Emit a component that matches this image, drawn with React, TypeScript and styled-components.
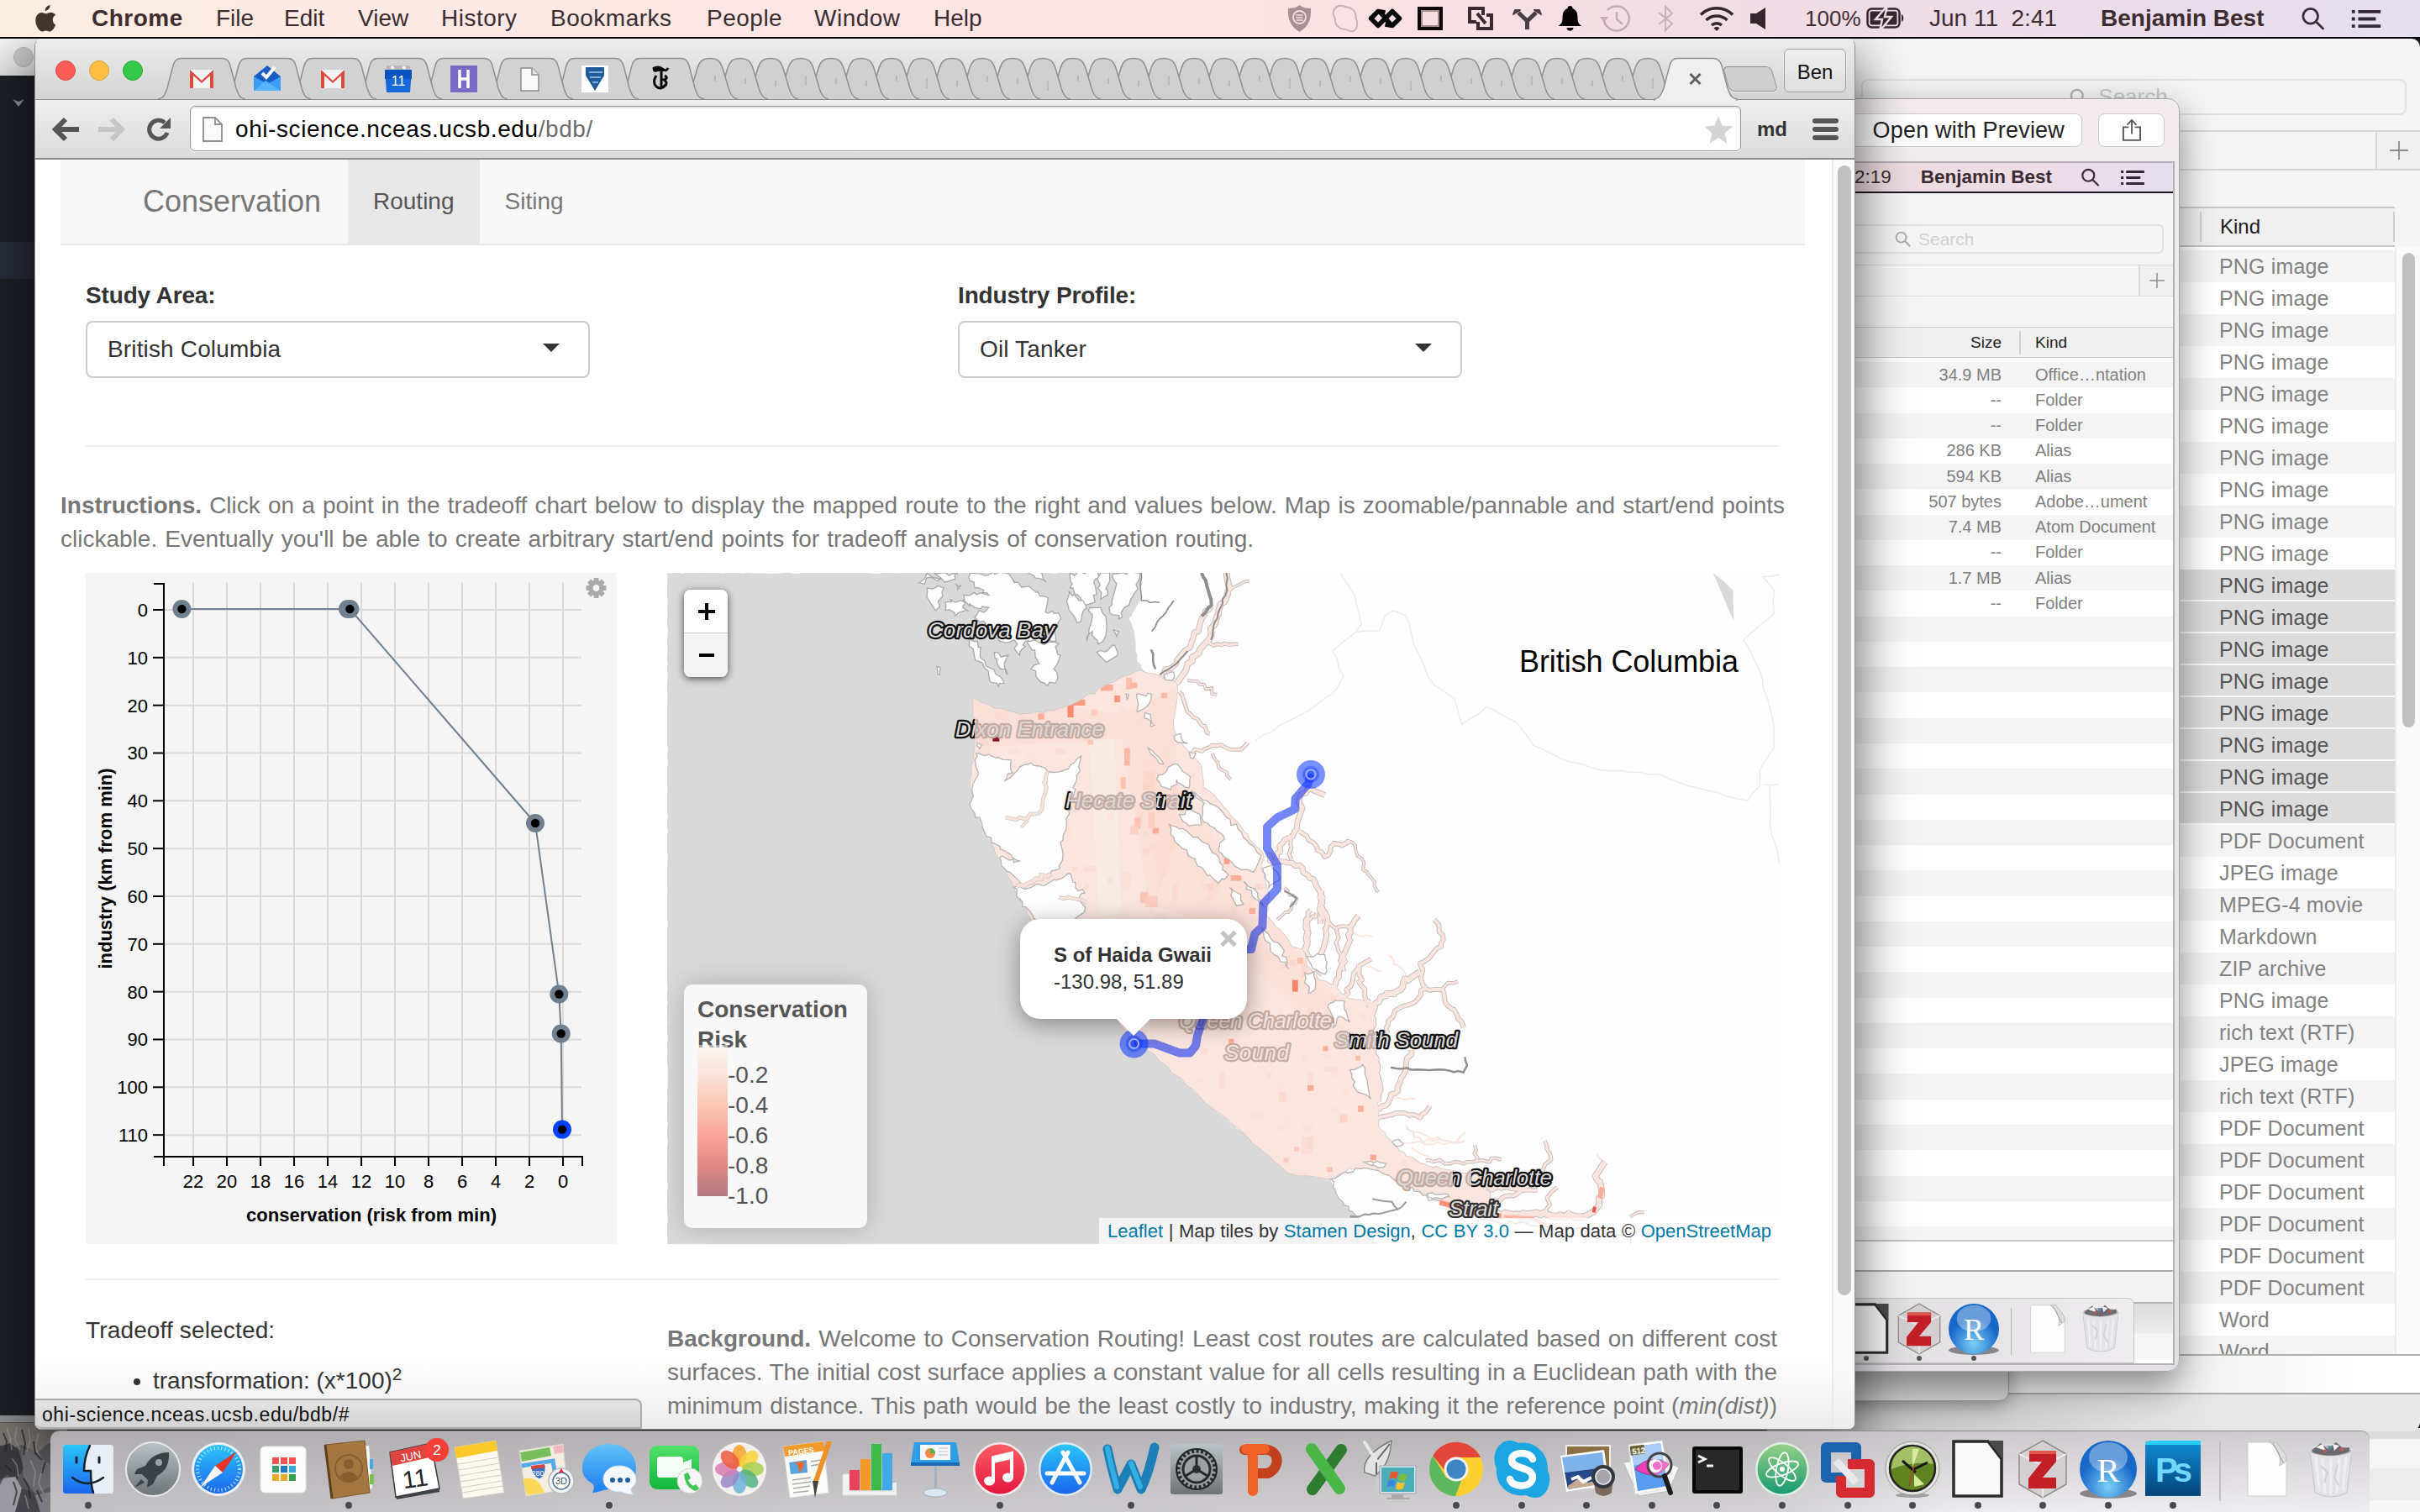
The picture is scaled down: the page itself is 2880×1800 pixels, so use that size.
import React from 'react';
import styled, { createGlobalStyle, css } from 'styled-components';

const sans = '"Liberation Sans", Arial, Helvetica, sans-serif';

const Global = createGlobalStyle`
  * { box-sizing: border-box; }
  html, body { margin: 0; padding: 0; }
  body { width: 2880px; height: 1800px; overflow: hidden; background: #16181c; font-family: ${sans}; }
  svg { display: block; flex: none; }
  svg text { font-family: ${sans}; }
`;

/* ---------- geometry helpers ---------- */

type Pt = [number, number];

const parse = (s: string, ox = 0, oy = 0, k = 1, ky = k): Pt[] =>
  s.trim().split(/\s+/).map((p) => {
    const [x, y] = p.split(',').map(Number);
    return [ox + x / k, oy + y / ky] as Pt;
  });
const north = (s: string) => parse(s, 1080, 680, 3);
const south = (s: string) => parse(s, 1440, 1060, 3);
const inland = (s: string) => parse(s, 1440, 660, 2.0632, 1.8667);

const makeRandom = (seed: number) => {
  let s = seed;
  return () => {
    s = (s * 16807) % 2147483647;
    return s / 2147483647;
  };
};

const jag = (pts: Pt[], closed = true, amp = 5, step = 6) => {
  const rand = makeRandom(Math.round(pts[0][0] * 31 + pts[0][1] * 7) + 11);
  const out: string[] = [];
  const count = closed ? pts.length : pts.length - 1;
  for (let i = 0; i < count; i++) {
    const [x1, y1] = pts[i];
    const [x2, y2] = pts[(i + 1) % pts.length];
    const n = Math.max(1, Math.round(Math.hypot(x2 - x1, y2 - y1) / step));
    for (let j = 0; j < n; j++) {
      const d = j === 0 ? 0 : amp;
      out.push(`${(x1 + ((x2 - x1) * j) / n + (rand() - 0.5) * d).toFixed(1)} ${(y1 + ((y2 - y1) * j) / n + (rand() - 0.5) * d).toFixed(1)}`);
    }
  }
  if (!closed) out.push(pts[pts.length - 1].join(' '));
  return 'M' + out.join('L') + (closed ? 'Z' : '');
};
const line = (pts: Pt[]) => 'M' + pts.map((p) => p.join(' ')).join('L');

/* ---------- desktop ---------- */

const Desktop = styled.div`
  position: relative;
  width: 2880px;
  height: 1800px;
  overflow: hidden;
  background: #16181c;
`;

const Glyph = styled.svg<{ $w: number; $h: number; $ml?: number }>`
  width: ${(p) => p.$w}px;
  height: ${(p) => p.$h}px;
  margin-left: ${(p) => p.$ml || 0}px;
  overflow: visible;
`;

/* ---------- menu bar ---------- */

const MenuBar = styled.header`
  position: absolute;
  inset: 0 0 auto 0;
  height: 46px;
  z-index: 9;
  display: flex;
  align-items: center;
  padding: 0 46px 0 42px;
  border-bottom: 2px solid #06060c;
  background: linear-gradient(90deg, #fbeee0 0%, #fde9e6 20%, #fce2e3 52%, #eedce6 78%, #e5dfef 100%);
  color: #3e2c31;
  font-size: 28px;
  line-height: 44px;
  white-space: nowrap;
`;
const Menus = styled.nav`
  display: flex;
  gap: 39px;
  margin-left: 42px;
  flex: 1;
`;
const Menu = styled.span<{ $w: number; $bold?: boolean }>`
  width: ${(p) => p.$w}px;
  font-weight: ${(p) => (p.$bold ? 700 : 400)};
  letter-spacing: ${(p) => (p.$w > 80 ? 0.5 : 0)}px;
`;
const StatusText = styled.span<{ $w: number; $ml: number; $bold?: boolean; $size?: number }>`
  width: ${(p) => p.$w}px;
  margin-left: ${(p) => p.$ml}px;
  font-weight: ${(p) => (p.$bold ? 700 : 400)};
  font-size: ${(p) => p.$size || 28}px;
  white-space: pre;
`;

const SearchGlyph = ({ w, h, ml, color = '#3b2b38', sw = 3 }: { w: number; h: number; ml?: number; color?: string; sw?: number }) => (
  <Glyph $w={w} $h={h} $ml={ml} viewBox="0 0 30 30" fill="none" stroke={color} strokeWidth={sw} strokeLinecap="round">
    <circle cx="12" cy="12" r="9.5" />
    <path d="M19 19L28 28" />
  </Glyph>
);
const ListGlyph = ({ w, h, ml }: { w: number; h: number; ml?: number }) => (
  <Glyph $w={w} $h={h} $ml={ml} viewBox="0 0 36 22" fill="#33273a">
    <path d="M0 0h4v4H0zM8 0h28v4H8zM0 9h4v4H0zM8 9h22v4H8zM0 18h4v4H0zM8 18h28v4H8z" />
  </Glyph>
);

const TopBar = () => (
  <MenuBar>
    <Glyph $w={25} $h={32} viewBox="0 0 25 32" fill="#43352c">
      <path d="M17.500 0c.4 3.400-2.600 6.900-5.800 6.900C11.200 3.600 14.300.5 17.500 0z" />
      <path d="M24.200 23.500c-1.600 4.300-4.300 8-6.800 8-1.800 0-2.500-1.100-4.700-1.100s-3 1.100-4.600 1.100C4.600 31.500.3 24.600.3 18.300c0-6 3.700-9.400 7.400-9.400 2.200 0 3.800 1.300 5.100 1.300 1.400 0 3.200-1.400 5.800-1.400 1.700 0 4 .8 5.500 3-4.900 2.900-4 9.600.1 11.700z" />
    </Glyph>
    <Menus>
      <Menu $w={109} $bold>Chrome</Menu>
      <Menu $w={42}>File</Menu>
      <Menu $w={49}>Edit</Menu>
      <Menu $w={60}>View</Menu>
      <Menu $w={91}>History</Menu>
      <Menu $w={147}>Bookmarks</Menu>
      <Menu $w={89}>People</Menu>
      <Menu $w={103}>Window</Menu>
      <Menu $w={60}>Help</Menu>
    </Menus>
    <Glyph $w={29} $h={32} viewBox="0 0 29 32">
      <path d="M14.500 0C18 3 23 4 28 4c1 12-3 22-13.500 28C4 26 0 16 1 4c5 0 10-1 13.500-4z" fill="#a78f93" />
      <circle cx="14.500" cy="14.500" r="7.500" fill="none" stroke="#f6dfe1" strokeWidth="1.800" />
      <path d="M10.500 12h8M10.500 15h8M10.500 18h8" stroke="#f6dfe1" strokeWidth="1.500" />
    </Glyph>
    <Glyph $w={33} $h={32} $ml={23} viewBox="0 0 33 32" fill="none" stroke="#c9b1b5" strokeWidth="2">
      <path d="M9 1c4-1 7 .5 9 1.500 8 0 12 6 11.500 13 3 5 2.500 13-3 15.500-4 1-7-1-8.500-2C9 29 4 23 5 16 1 11 2 4 9 1z" />
    </Glyph>
    <Glyph $w={41} $h={24} $ml={11} viewBox="0 0 41 24" fill="none" stroke="#050505" strokeWidth="5.500" strokeLinejoin="round">
      <path d="M20.500 5L12 3.500L3.500 12L12 20.500L20.500 12L29 3.500L37.500 12L29 20.500L20.500 19M14 4L28 20" />
    </Glyph>
    <Glyph $w={30} $h={28} $ml={18} viewBox="0 0 30 28">
      <rect x="2" y="2" width="26" height="24" fill="#f7dfe1" stroke="#0c0809" strokeWidth="4" />
      <rect x="5" y="5" width="20" height="18" fill="none" stroke="#8a6f73" strokeWidth="1.500" />
    </Glyph>
    <Glyph $w={30} $h={28} $ml={30} viewBox="0 0 30 28" fill="none" stroke="#3b2b30" strokeWidth="4">
      <path d="M10 18H2V2h16v8M12 18v8h16V10h-6M11 8l10 12" />
    </Glyph>
    <Glyph $w={35} $h={25} $ml={23} viewBox="0 0 35 25" fill="none" stroke="#463e40" strokeWidth="5" strokeLinejoin="round">
      <path d="M17.500 25V15L7 5M17.500 15L28 5" />
      <path d="M1 7l2-5 6 0zM34 7l-2-5-6 0z" fill="#463e40" strokeWidth="2" />
    </Glyph>
    <Glyph $w={29} $h={30} $ml={19} viewBox="0 0 29 30" fill="#050303">
      <path d="M14.500 0c2 0 3 1 3 3 5 2 6 6 6 12 0 5 2 7 5 9H.5c3-2 5-4 5-9 0-6 1-10 6-12 0-2 1-3 3-3zM10.500 26h8c-.5 5-7.500 5-8 0z" />
    </Glyph>
    <Glyph $w={37} $h={32} $ml={21} viewBox="0 0 37 32" fill="none" stroke="#c4acb2" strokeWidth="2.500">
      <path d="M5 18A15 14.500 0 1 0 9 6M20 8v9l7 6" />
      <path d="M0 14l5 7 5-7z" fill="#c4acb2" stroke="none" />
    </Glyph>
    <Glyph $w={21} $h={30} $ml={31} viewBox="0 0 21 30" fill="none" stroke="#c9b3ba" strokeWidth="2.200">
      <path d="M2 8l16 13-8 8V1l8 8L2 22" />
    </Glyph>
    <Glyph $w={42} $h={29} $ml={29} viewBox="0 0 42 29" fill="none" stroke="#35252c" strokeWidth="3.500">
      <path d="M2 9.500a27 27 0 0 1 38 0M8.500 16a18 18 0 0 1 25 0M15 22a9 9 0 0 1 12 0" />
      <path d="M17.500 25.500a5 5 0 0 1 7 0L21 29z" fill="#35252c" stroke="none" />
    </Glyph>
    <Glyph $w={18} $h={26} $ml={19} viewBox="0 0 18 26" fill="#35252c">
      <path d="M0 7h7L18 0v26L7 19H0z" />
    </Glyph>
    <StatusText $w={63} $ml={47} $size={26}>100%</StatusText>
    <Glyph $w={46} $h={26} $ml={10} viewBox="0 0 46 26">
      <rect x="1.500" y="1.500" width="38" height="22" rx="5" fill="none" stroke="#35252c" strokeWidth="2.500" />
      <rect x="4.500" y="4.500" width="32" height="16" rx="2" fill="#35252c" />
      <path d="M42 8c3 1 3 8 0 9z" fill="#35252c" />
      <path d="M25-2L11 14h8l-3 14L30 11h-8z" fill="#35252c" stroke="#eddbe3" strokeWidth="2.500" />
    </Glyph>
    <StatusText $w={159} $ml={29}>{'Jun 11  2:41'}</StatusText>
    <StatusText $w={194} $ml={45} $bold>Benjamin Best</StatusText>
    <SearchGlyph w={29} h={28} ml={44} />
    <ListGlyph w={36} h={21} ml={31} />
  </MenuBar>
);

/* ---------- editor window peeking out on the left ---------- */

const EditorWindow = styled.section`
  position: absolute;
  left: -40px;
  top: 46px;
  width: 120px;
  height: 1647px;
  border-radius: 12px 12px 10px 10px;
  overflow: hidden;
  background: #1c2026;
  border-bottom: 8px solid #8d9093;
`;
const EditorTitle = styled.div`
  height: 44px;
  padding: 10px 0 0 56px;
  background: linear-gradient(#f4f4f4, #dedede);
`;
const EditorDot = styled.div`
  width: 24px;
  height: 24px;
  border-radius: 50%;
  background: #c8c8c8;
  border: 1px solid #b5b5b5;
`;
const EditorTree = styled.div`
  padding: 28px 0 0 55px;
  height: 198px;
`;
const EditorSelected = styled.div`
  height: 44px;
  background: #282d39;
`;
const Rocks = styled.svg`
  position: absolute;
  left: 0;
  top: 1680px;
  width: 80px;
  height: 120px;
`;

const Editor = () => (
  <>
    <Rocks viewBox="0 0 80 120">
      <rect width="80" height="120" fill="#5a585c" />
      <path d="M0 14H80V44L58 38 44 50 26 40 12 46 0 40z" fill="#7b7571" />
      <path d="M0 42l12-4 10 8 6 22-8 14-12-6-8 6z" fill="#3b3940" />
      <path d="M26 44l14 4 20 16v26l-18 8-14-20z" fill="#6b6a71" />
      <path d="M4 80l14-2 8 14-6 28H0V88z" fill="#9a9aa2" />
      <path d="M26 92l14 4 8 24H18z" fill="#45434a" />
      <path d="M42 100l18-4v24H48z" fill="#7d7c84" />
      <g stroke="#a8a39f" strokeWidth="1.500" fill="none" opacity=".6">
        <path d="M8 20l4 12 2 14M20 18l-2 16 6 12M34 20l2 14-4 14M46 26l-4 18 8 14M14 56l6 8 2 14M36 58l6 14-2 18M50 70l-4 16 6 12M8 92l6 8-2 14M30 100l4 16" />
      </g>
      <g stroke="#26242a" strokeWidth="2" fill="none" opacity=".7">
        <path d="M4 26l4 10-2 12M26 22l4 16-2 14M40 36l2 14 8 8M6 64l8 8M28 80l6 10 2 14M54 60l-4 14M44 94l6 14M16 84l4 12-4 16" />
      </g>
    </Rocks>
    <EditorWindow>
      <EditorTitle><EditorDot /></EditorTitle>
      <EditorTree>
        <Glyph $w={14} $h={9} viewBox="0 0 14 9" fill="#8b93a0"><path d="M0 0l7 3 7-3-7 9z" /></Glyph>
      </EditorTree>
      <EditorSelected />
    </EditorWindow>
  </>
);

/* ---------- Finder window ---------- */

const FinderWindow = styled.section`
  position: absolute;
  left: 2100px;
  top: 46px;
  width: 780px;
  height: 1658px;
  display: flex;
  flex-direction: column;
  overflow: hidden;
  background: #f5f5f5;
  border-radius: 8px 10px 12px 8px;
`;
const FinderTitle = styled.div`
  height: 109px;
  padding: 48px 16px 0 115px;
`;
const FinderSearch = styled.div`
  height: 43px;
  display: flex;
  justify-content: center;
  align-items: center;
  gap: 12px;
  padding-right: 36px;
  border: 2px solid #e0e0e0;
  border-radius: 8px;
  color: #c6c6c6;
  font-size: 26px;
`;
const FinderTabs = styled.div`
  height: 48px;
  display: flex;
  justify-content: flex-end;
  border: solid #d6d6d6;
  border-width: 2px 0;
`;
const AddCell = styled.div<{ $w: number; $s: number }>`
  width: ${(p) => p.$w}px;
  display: flex;
  align-items: center;
  justify-content: center;
  border-left: 2px solid #d9d9d9;
  background: #f0f0f0;
  svg { width: ${(p) => p.$s}px; height: ${(p) => p.$s}px; }
`;
const FinderGap = styled.div`
  height: 43px;
`;
const FinderHead = styled.div`
  height: 48px;
  width: 750px;
  display: flex;
  align-items: center;
  justify-content: flex-end;
  border: solid #c8c8c8;
  border-width: 2px 0;
  background: #f0f0f0;
  font-size: 24px;
  color: #1d1d1d;
`;
const FinderHeadCell = styled.div`
  width: 232px;
  height: 36px;
  line-height: 36px;
  padding-left: 22px;
  border: solid #d0d0d0;
  border-width: 0 2px;
`;
const FinderBody = styled.div`
  height: 1320px;
  display: flex;
  background: #fff;
  overflow: hidden;
  border-bottom: 2px solid #b0b0b0;
`;
const FinderRows = styled.div`
  width: 750px;
  padding-top: 4px;
`;
const FinderRow = styled.div<{ $odd: boolean; $sel: boolean }>`
  height: 38px;
  padding-left: 541px;
  line-height: 38px;
  font-size: 25px;
  letter-spacing: 0.150px;
  color: ${(p) => (p.$sel ? '#555' : '#828282')};
  background: ${(p) => (p.$sel ? '#dcdcdc' : p.$odd ? '#f4f4f4' : '#fff')};
  ${(p) => p.$sel && css`border-bottom: 2px solid #fbfbfb;`}
`;
const FinderTrack = styled.div`
  width: 30px;
  padding: 7px 7px 0;
  background: #fafafa;
  border-left: 2px solid #ececec;
`;
const FinderThumb = styled.div`
  width: 15px;
  height: 565px;
  border-radius: 8px;
  background: #c1c1c1;
`;
const FinderPath = styled.div`
  height: 46px;
  background: linear-gradient(90deg, #eee 60%, #fff 90%);
  border-bottom: 2px solid #aaa;
`;
const FinderFoot = styled.div`
  flex: 1;
  background: linear-gradient(90deg, #bdbdbd 10%, #e8e8e8 70%);
`;

const kinds = [
  ...Array(18).fill('PNG image'),
  'PDF Document', 'JPEG image', 'MPEG-4 movie', 'Markdown', 'ZIP archive', 'PNG image',
  'rich text (RTF)', 'JPEG image', 'rich text (RTF)',
  ...Array(6).fill('PDF Document'), 'Word', 'Word',
];

const Plus = () => (
  <svg viewBox="0 0 24 24" stroke="#8c8c8c" strokeWidth="2"><path d="M12 0v24M0 12h24" /></svg>
);

const Finder = () => (
  <FinderWindow>
    <FinderTitle>
      <FinderSearch><SearchGlyph w={22} h={22} color="#b0b0b0" />Search</FinderSearch>
    </FinderTitle>
    <FinderTabs><AddCell $w={53} $s={22}><Plus /></AddCell></FinderTabs>
    <FinderGap />
    <FinderHead><FinderHeadCell>Kind</FinderHeadCell></FinderHead>
    <FinderBody>
      <FinderRows>
        {kinds.map((k, i) => (
          <FinderRow key={i} $odd={i % 2 === 0} $sel={i >= 10 && i < 18}>{k}</FinderRow>
        ))}
      </FinderRows>
      <FinderTrack><FinderThumb /></FinderTrack>
    </FinderBody>
    <FinderPath />
    <FinderFoot />
  </FinderWindow>
);

const StubWindow = styled.section`
  position: absolute;
  left: 2100px;
  top: 1500px;
  width: 291px;
  height: 168px;
  background: #d4d4d4;
  border: 1px solid #9c9c9c;
  border-radius: 12px;
  box-shadow: 0 4px 22px rgba(0, 0, 0, 0.35);
`;
const UnderDock = styled.section`
  position: absolute;
  left: 2700px;
  top: 1700px;
  width: 180px;
  height: 100px;
  background: linear-gradient(#dcdcdc 0 12px, #f6f6f6 14px 48px, #ececec 48px 86px, #f8f8f8 86px);
`;

/* ---------- Quick Look window ---------- */

const QuickLook = styled.section`
  position: absolute;
  left: 2100px;
  top: 117px;
  width: 494px;
  height: 1516px;
  padding: 0 5px 7px 0;
  display: flex;
  flex-direction: column;
  background: linear-gradient(#f3ecee, #f0ebf0 8%, #e2e0e4);
  border: 1px solid #aaa6aa;
  border-radius: 14px;
  box-shadow: 0 16px 44px rgba(0, 0, 0, 0.45);
`;
const QuickBar = styled.div`
  height: 74px;
  padding: 0 12px;
  display: flex;
  justify-content: flex-end;
  align-items: center;
  gap: 19px;
`;
const QuickButton = styled.div<{ $w: number }>`
  width: ${(p) => p.$w}px;
  height: 40px;
  display: flex;
  justify-content: flex-end;
  align-items: center;
  padding-right: ${(p) => (p.$w > 100 ? 20 : 27)}px;
  background: #fff;
  border: 1px solid #cdc7ca;
  border-radius: 8px;
  font-size: 27px;
  letter-spacing: 0.200px;
  color: #222;
  white-space: nowrap;
`;
const Shot = styled.div`
  flex: 1;
  position: relative;
  display: flex;
  flex-direction: column;
  overflow: hidden;
  border: solid #b7afb8;
  border-width: 2px 2px 2px 0;
  background: #fff;
`;
const ShotMenu = styled.div`
  height: 36px;
  display: flex;
  align-items: center;
  justify-content: flex-end;
  padding: 0 33px 0 0;
  border-bottom: 2px solid #1d1524;
  background: linear-gradient(90deg, #ecdcdf 20%, #eedde6 60%, #e5deee);
  color: #3b2b33;
  font-size: 22.500px;
  line-height: 32px;
`;
const ShotName = styled.b`
  margin: 0 34px 0 35px;
`;
const ShotTitle = styled.div`
  height: 85px;
  padding: 37px 11px 0;
  background: #f5f5f5;
`;
const ShotSearch = styled.div`
  height: 35px;
  display: flex;
  align-items: center;
  gap: 9px;
  padding-left: 141px;
  border: 2px solid #e0e0e0;
  border-radius: 6px;
  color: #d0d0d0;
  font-size: 21px;
`;
const ShotTabs = styled.div`
  height: 38px;
  display: flex;
  justify-content: flex-end;
  background: #f5f5f5;
  border: solid #d9d9d9;
  border-width: 1px 0;
`;
const ShotRow = styled.div<{ $bg: string }>`
  flex: none;
  height: 30.280px;
  display: flex;
  align-items: center;
  font-size: 20px;
  color: #7f7f7f;
  background: ${(p) => p.$bg};
`;
const ShotHead = styled(ShotRow)`
  margin-top: 36px;
  height: 37px;
  border: solid #c9c9c9;
  border-width: 1px 0;
  font-size: 19px;
  color: #222;
`;
const ShotTop = styled.div`
  background: #f5f5f5;
`;
const ShotRows = styled.div`
  padding-top: 5px;
  height: 1052px;
  overflow: hidden;
  border-bottom: 2px solid #c4c4c4;
`;
const SizeCell = styled.span`
  width: 281px;
  text-align: right;
`;
const KindCell = styled.span<{ $head?: boolean }>`
  margin-left: ${(p) => (p.$head ? 21 : 40)}px;
  white-space: nowrap;
  ${(p) => p.$head && css`padding-left: 17px; border-left: 2px solid #d0d0d0; line-height: 28px;`}
`;
const ShotPath = styled.div`
  height: 36px;
  border-bottom: 2px solid #a9a9a9;
`;
const ShotFoot = styled.div`
  height: 38px;
  background: #f3f3f3;
  border-bottom: 2px solid #b5b5b5;
`;
const ShotTail = styled.div`
  flex: 1;
  background: linear-gradient(#dcdcdc, #ececec 35px, #f6f6f6 36px 66px, #fff 66px);
`;
const ShotDock = styled.div`
  position: absolute;
  left: 0;
  bottom: 0;
  width: 439px;
  height: 78px;
  display: flex;
  align-items: flex-start;
  padding: 6px 0 0 91px;
  border: 1px solid #c6c4c6;
  border-radius: 0 8px 0 0;
  background: linear-gradient(90deg, #dcdadc, #eeecee);
`;
const ShotIcon = styled.div<{ $w: number }>`
  width: ${(p) => p.$w}px;
  display: flex;
  flex-direction: column;
  align-items: center;
  gap: 2px;
`;
const ShotDot = styled.i`
  width: 6px;
  height: 6px;
  border-radius: 50%;
  background: #555;
`;
const ShotRule = styled.div`
  width: 1px;
  height: 56px;
  margin: 5px 9px 0 15px;
  background: #bbb;
`;

const files: [string, string][] = [
  ['34.9 MB', 'Office…ntation'], ['--', 'Folder'], ['--', 'Folder'], ['286 KB', 'Alias'], ['594 KB', 'Alias'],
  ['507 bytes', 'Adobe…ument'], ['7.4 MB', 'Atom Document'], ['--', 'Folder'], ['1.7 MB', 'Alias'], ['--', 'Folder'],
  ...Array(25).fill(['', '']),
];

/* ---------- dock drawings ---------- */

const Libre = () => (
  <g>
    <path d="M5 1H46L62 22V66H5z" fill="#fafafa" stroke="#2c2c2c" strokeWidth="3.500" />
    <path d="M46 0H64V22z" fill="#4a4a4a" />
  </g>
);
const Zotero = () => (
  <g>
    <path d="M34 0L62 16V52L34 68L6 52V16z" fill="#d4d0d2" stroke="#8e8c8e" strokeWidth="1.500" />
    <path d="M6 16L34 30L62 16M34 30V68" stroke="#f2f0f2" strokeWidth="1.500" fill="none" />
    <path d="M18 12H50V25L34 44H50V57H17V45L33 25H18z" fill="#c22026" />
    <path d="M18 12H50V16H18z" fill="#e0574f" />
  </g>
);
const RStudio = () => (
  <g>
    <ellipse cx="34" cy="63" rx="34" ry="6" fill="#6f6d70" opacity=".8" />
    <circle cx="34" cy="34" r="34" fill="url(#rGrad)" />
    <ellipse cx="34" cy="20" rx="23" ry="18" fill="#fff" opacity=".35" />
    <text x="34" y="49" textAnchor="middle" fontSize="41" fill="#fff" style={{ fontFamily: '"Liberation Serif", serif' }}>R</text>
  </g>
);
const PaperDoc = () => (
  <g>
    <path d="M12 2H46L58 18V66H12z" fill="#fdfdfd" stroke="#cfcdcf" />
    <path d="M38 2C46 8 52 14 50 30L58 24V18L46 2z" fill="#dedcde" stroke="#bdbbbd" />
    <path d="M42 3L54 26" stroke="#999" />
  </g>
);
const Trash = () => (
  <g>
    <path d="M9 12H59L53 62Q34 72 15 62z" fill="#e3e2e6" stroke="#c6c4c8" />
    <path d="M16 20L20 60M24 22L27 63M34 22V65M44 22L41 63M52 20L48 60" stroke="#efeff2" strokeWidth="3" fill="none" />
    <path d="M22 30L30 38L26 50M42 28L38 44L44 54" stroke="#d3d2d8" strokeWidth="2" fill="none" />
    <ellipse cx="34" cy="12" rx="25" ry="7" fill="#bab8bc" stroke="#eee" />
    <path d="M12 11L22 3L30 10L40 2L48 9L56 8V13Q34 22 12 14z" fill="#6c6a70" />
    <path d="M16 8L24 4L28 12zM36 4L44 6L38 12z" fill="#f4f4f4" />
    <path d="M44 10l6-2-2 6zM26 10l4 2-5 3z" fill="#c85a4c" />
    <path d="M30 6l5 1-3 5z" fill="#4c8ca8" />
  </g>
);

const icons: { name: string; dot?: boolean; art: React.ReactNode }[] = [
  { name: 'finder', dot: true, art: <g><rect x="4" y="5" width="60" height="58" rx="3" fill="#e7eef6" /><path d="M4 8Q4 5 7 5H36C31 16 29 26 29 36H37C37 46 38 56 40 63H7Q4 63 4 60z" fill="url(#blueGrad)" /><path d="M20 20V26M47 20V26" stroke="#13202e" strokeWidth="3" strokeLinecap="round" /><path d="M15 44Q33 58 52 44M36 6C31 16 29 26 29 36H37C37 46 38 56 40 62" stroke="#13202e" strokeWidth="2.500" fill="none" strokeLinecap="round" /></g> },
  { name: 'launchpad', art: <g><circle cx="34" cy="34" r="32" fill="url(#steel)" stroke="#e6eaec" strokeWidth="2" /><path d="M53 14C40 14 30 20 25 30L15 34L12 40L21 40L28 47L27 56L34 52L39 42C50 36 54 26 53 14z" fill="#3c4146" /><circle cx="41" cy="26" r="4" fill="#9aa3a7" /><path d="M20 46L12 56L24 50z" fill="#3c4146" /></g> },
  { name: 'safari', art: <g><circle cx="34" cy="34" r="32" fill="#eef1f4" /><circle cx="34" cy="34" r="29" fill="url(#blueGrad)" /><circle cx="34" cy="34" r="25" fill="none" stroke="#d5ecff" strokeWidth="4" strokeDasharray="1 3.300" /><path d="M56 13L39 38L30 30z" fill="#e5352b" /><path d="M12 56L30 30L39 38z" fill="#f4f4f4" /></g> },
  { name: 'tiles', art: <g><rect x="7" y="7" width="54" height="55" rx="5" fill="#fbfbfb" stroke="#e4e4e4" />{['#f0524f', '#f0524f', '#f0524f', '#35a168', '#1e78c8', '#35a8d8', '#e6ab2c', '#e6ab2c', '#39a052'].map((c, i) => <rect key={i} x={21 + (i % 3) * 10} y={20 + Math.floor(i / 3) * 10} width="8" height="8" fill={c} />)}</g> },
  { name: 'contacts', dot: true, art: <g><path d="M14 12L58 6L62 56L56 60z" fill="#f6f6f4" /><path d="M59 22h4v12h-4z" fill="#4aa7dd" /><path d="M59 40h5v12h-5z" fill="#7ac153" /><path d="M6 5L53 0L59 62L14 69z" fill="#a57740" stroke="#7f5727" /><path d="M6 5L14 69" stroke="#5f3f18" strokeWidth="3" /><circle cx="34" cy="33" r="16" fill="none" stroke="#865e2f" strokeWidth="2" /><circle cx="34" cy="28" r="6" fill="#865e2f" /><path d="M23 43Q34 31 45 43Q34 53 23 43z" fill="#865e2f" /></g> },
  { name: 'calendar', art: <g><path d="M5 14L54 3L64 57L12 67z" fill="#fff" stroke="#3b3b3b" strokeWidth="1.500" /><path d="M5 14L54 3L57 19L8 30z" fill="#e04440" /><path d="M12 67L64 57V61L13 70z" fill="#3e434a" /><text x="17" y="23" fontSize="13" fill="#fff" transform="rotate(-11 30 18)">JUN</text><text x="35" y="55" fontSize="29" textAnchor="middle" fill="#222" transform="rotate(-8 36 44)">11</text><circle cx="61" cy="11" r="14" fill="#f5403a" /><text x="61" y="17" fontSize="17" textAnchor="middle" fill="#fff">2</text></g> },
  { name: 'notes', art: <g><path d="M5 8L54 0L64 62L15 69z" fill="#fcfaf0" stroke="#d4d0c4" /><path d="M5 8L54 0L56 12L7 21z" fill="#fbc92c" /><path d="M9 28l48-8M10 35l48-8M11 42l48-8M12 49l48-8M13 56l48-8M14 62l48-8" stroke="#cfccc4" strokeWidth="1" /></g> },
  { name: 'maps', art: <g><path d="M4 12L56 4L61 58L12 66z" fill="#f3eee2" stroke="#d9d4c8" /><path d="M5 14L40 8L42 18L7 25z" fill="#79be5c" /><path d="M44 7L56 5L57 14L46 16z" fill="#f1b9c4" /><path d="M7 30L44 24L50 60" stroke="#57a8e8" strokeWidth="5" fill="none" /><path d="M8 46Q26 40 34 62L13 65z" fill="#fcd95b" /><path d="M18 30L34 28Q38 40 28 46Q18 42 18 30z" fill="#3a6fc0" stroke="#fff" /><path d="M18 30L34 28L35 32L18 34z" fill="#d3463e" /><text x="26" y="42" fontSize="9" textAnchor="middle" fill="#fff">280</text><circle cx="54" cy="48" r="15" fill="#f4f4f4" stroke="#bbb" strokeWidth="1.500" /><circle cx="54" cy="48" r="10" fill="#fff" stroke="#4a6e94" strokeWidth="1.500" /><text x="54" y="52" fontSize="11" textAnchor="middle" fill="#456">3D</text><path d="M54 33l-3 5h6z" fill="#e24" /></g> },
  { name: 'messages', dot: true, art: <g><path d="M34 4C52 4 66 16 66 33C66 50 52 58 34 58C28 58 20 62 14 62Q17 56 15 52C7 47 2 42 2 33C2 16 16 4 34 4z" fill="url(#skyGrad)" /><path d="M46 30C57 30 66 37 66 46C66 51 63 55 60 57Q59 61 63 64Q54 64 49 61C36 62 27 55 27 46C27 37 35 30 46 30z" fill="#f5f8fc" stroke="#c9dff2" /><circle cx="38" cy="47" r="3" fill="#1c5fa8" /><circle cx="47" cy="47" r="3" fill="#1c5fa8" /><circle cx="56" cy="47" r="3" fill="#1c5fa8" /></g> },
  { name: 'facetime', art: <g><rect x="4" y="6" width="59" height="52" rx="9" fill="url(#greenGrad)" /><path d="M13 22Q13 19 16 19H40Q44 19 44 23V26L54 22V40L44 38Q44 44 40 44H16Q13 44 13 41z" fill="#f5fff5" /><circle cx="52" cy="48" r="15" fill="#f5f5f5" stroke="#ccc" /><path d="M45 40l5-2 3 7-3 2q2 5 6 7l3-2 4 5q-3 4-7 2Q46 54 45 40z" fill="#3cc754" /></g> },
  { name: 'photos', art: <g><circle cx="34" cy="34" r="32" fill="#f3f1ef" />{['#f7a22d', '#f4d23a', '#a8cf4d', '#55b27c', '#6fb2dc', '#9a86c6', '#d67db0', '#ee5a40'].map((c, i) => <ellipse key={i} cx="34" cy="18" rx="8.500" ry="13" fill={c} opacity=".85" transform={`rotate(${i * 45} 34 34)`} />)}</g> },
  { name: 'pages', art: <g><path d="M8 7L56 1L62 62L16 68z" fill="#fbfbf8" stroke="#ddd" /><path d="M8 7L56 1L58 12L10 19z" fill="#f29a2a" /><text x="14" y="17" fontSize="9" fontWeight="700" fill="#fff" transform="rotate(-7 20 14)">PAGES</text><path d="M15 26L36 23L37 38L17 40z" fill="#58a5e2" /><path d="M21 26q6 2 6 12q6-4 6-13z" fill="#ee6a2c" /><path d="M41 25l12-2M41 30l12-2M19 47l22-3M19 52l22-3M20 57l20-3M20 62l18-2" stroke="#aaa" strokeWidth="1.500" /><path d="M66 1L50 48L46 68L44 48L60 1z" fill="#f08f24" /><path d="M50 48L46 68L43 48z" fill="#444" /></g> },
  { name: 'numbers', art: <g><path d="M2 40H10V60H66V65H2z" fill="#f3f3f3" stroke="#ddd" /><path d="M66 50v10h-6V50z" fill="#eee" /><rect x="10" y="35" width="12" height="24" fill="#e8425a" /><rect x="23" y="22" width="12" height="37" fill="#f49a2c" /><rect x="36" y="4" width="12" height="55" fill="#3cbb48" /><rect x="49" y="15" width="12" height="44" fill="#42a9e8" /></g> },
  { name: 'keynote', art: <g><path d="M9 2H59L63 26H5z" fill="#2f9ce8" /><path d="M5 26H63V30H5z" fill="#1b6cb4" /><rect x="16" y="5" width="36" height="18" fill="#f4f8fc" /><circle cx="28" cy="15" r="6" fill="#e84" /><path d="M28 9a6 6 0 0 1 6 6h-6z" fill="#4b4" /><path d="M38 9h11M38 13h11M38 17h11" stroke="#bbb" /><path d="M33 30h3v30h-3z" fill="#9fb4c2" /><ellipse cx="34" cy="62" rx="14" ry="5" fill="#d9e8f2" stroke="#9bb4c4" /></g> },
  { name: 'itunes', dot: true, art: <g><circle cx="34" cy="34" r="32" fill="#f6e9ec" /><circle cx="34" cy="34" r="29.500" fill="url(#redGrad)" /><path d="M26 48V20L48 15V43" stroke="#fff" strokeWidth="4" fill="none" /><path d="M26 20L48 15V22L26 27z" fill="#fff" /><ellipse cx="21.500" cy="48" rx="6.500" ry="5.500" fill="#fff" /><ellipse cx="43.500" cy="44" rx="6.500" ry="5.500" fill="#fff" /></g> },
  { name: 'appstore', art: <g><circle cx="34" cy="34" r="32" fill="#dfeaf4" /><circle cx="34" cy="34" r="29.500" fill="url(#blueGrad)" /><path d="M37 14L18 50M31 14L51 50M12 39H56" stroke="#fff" strokeWidth="5" strokeLinecap="round" fill="none" /></g> },
  { name: 'word', dot: true, art: <g fill="none" strokeLinecap="round" strokeLinejoin="round"><path d="M6 10C10 30 14 44 18 58L34 28L46 58C54 42 58 26 62 8" stroke="#1c7fb8" strokeWidth="11" /><path d="M6 9C10 29 14 43 17 55M34 27L45 55" stroke="#35aee2" strokeWidth="6" /></g> },
  { name: 'settings', art: <g><rect x="4" y="4" width="62" height="60" rx="3" fill="url(#steel)" /><circle cx="35" cy="34" r="24" fill="#9a9ea1" stroke="#222" strokeWidth="2" /><circle cx="35" cy="34" r="22" fill="none" stroke="#26292c" strokeWidth="5" strokeDasharray="3 2.700" /><circle cx="35" cy="34" r="16" fill="#9da1a4" stroke="#26292c" strokeWidth="3" /><circle cx="35" cy="34" r="5" fill="#303438" /><path d="M35 34V19M35 34L22 42M35 34L48 42" stroke="#26292c" strokeWidth="3" /></g> },
  { name: 'powerpoint', art: <g fill="none" strokeLinecap="round" strokeLinejoin="round" transform="translate(4 0)"><path d="M10 11H32C52 9 54 32 38 39H26" stroke="#c3401c" strokeWidth="12" /><path d="M12 10Q20 10 20 22V60M14 10H34" stroke="#f06228" strokeWidth="12" /></g> },
  { name: 'excel', art: <g strokeLinecap="round"><path d="M52 11L18 58" stroke="#2d7c2f" strokeWidth="14" /><path d="M17 10L50 57" stroke="#4bb648" strokeWidth="14" /></g> },
  { name: 'remote', art: <g><path d="M2 38Q-2 18 34 0Q32 30 14 42z" fill="#e2e2e2" stroke="#7d7d7d" strokeWidth="1.500" /><path d="M2 2L16 24L32 4M16 24V40" stroke="#666" strokeWidth="2" fill="none" /><path d="M2 2L16 24" stroke="#e6e6e6" strokeWidth="4" strokeLinecap="round" /><path d="M18 44Q12 62 24 66" stroke="#ccc" strokeWidth="4" fill="none" /><rect x="20" y="30" width="43" height="33" fill="#dfe6ea" stroke="#9aa4aa" /><rect x="22" y="32" width="39" height="29" fill="#49aeb8" /><path d="M33 38q5-3 9 0l-2 8q-4-3-9 0z" fill="#e8582c" /><path d="M44 39q5 3 9 0l-2 8q-5 3-9 0z" fill="#7cbc3c" /><path d="M30 48q5-3 9 0l-2 8q-4-3-9 0z" fill="#3c86dc" /><path d="M41 49q5 3 9 0l-2 8q-5 3-9 0z" fill="#f6c52c" /><path d="M34 64h14v4h8v2H28v-2h6z" fill="#aaa" /></g> },
  { name: 'chrome', dot: true, art: <g><circle cx="34" cy="34" r="32" fill="#fcd02f" /><path d="M6.300 18A32 32 0 0 1 63 20H34L24 40z" fill="#e2453c" /><path d="M6.300 18L22 44L40 48L33 66A32 32 0 0 1 6.300 18z" fill="#5cb75f" /><circle cx="34" cy="34" r="14.500" fill="#f4f4f4" /><circle cx="34" cy="34" r="11.500" fill="#3d86c2" /></g> },
  { name: 'skype', dot: true, art: <g><path d="M20 0C25 0 28 2 30 3C50 0 66 15 65 36C71 47 65 68 50 68C45 68 42 66 39 65C18 68 2 53 4 33C-3 19 5 0 20 0z" fill="#1ba5e3" /><path d="M47 22C44 13 23 12 22 23C22 35 47 30 47 44C46 57 22 56 20 46" stroke="#fff" strokeWidth="8.500" strokeLinecap="round" fill="none" /></g> },
  { name: 'preview', dot: true, art: <g><rect x="10" y="6" width="52" height="50" fill="#8d6f45" stroke="#eee" strokeWidth="2" /><path d="M3 18L55 11L61 52L10 61z" fill="#fff" /><path d="M5 20L53 14L55 32L8 38z" fill="#7db2ea" /><path d="M8 38L55 32L58 50L12 58z" fill="#23498a" /><path d="M12 54L26 44L36 50L58 44V51L12 58z" fill="#c4a890" /><path d="M16 46l8-3 6 6 10-5" stroke="#fff" strokeWidth="4" fill="none" /><path d="M42 46L66 42L64 62Q54 70 45 62z" fill="#7b6a5c" /><circle cx="54" cy="43" r="12" fill="#b9b2b4" stroke="#33393f" strokeWidth="4" /><circle cx="54" cy="43" r="9" fill="#a9a2a8" stroke="#d5e5f2" strokeWidth="1.500" /></g> },
  { name: 'viewer', dot: true, art: <g><path d="M0 26L40 20L66 32L54 60L18 66z" fill="#f6f6f6" stroke="#bbb" /><path d="M6 5L46 0L57 56L14 64z" fill="#fff" stroke="#ddd" /><path d="M9 8L44 3L53 54L17 60z" fill="#5a9bf2" /><path d="M9 8L44 3L47 22L12 30z" fill="#a9cdf8" /><rect x="8" y="6" width="17" height="11" fill="#6d6332" transform="rotate(-7 14 10)" /><text x="10" y="16" fontSize="9.500" fontWeight="700" fill="#fff" transform="rotate(-7 14 10)">512</text><path d="M14 34Q32 14 54 28Q40 50 14 34z" fill="#ee3fb8" stroke="#b02a88" /><circle cx="38" cy="30" r="8" fill="#fff" /><circle cx="40" cy="30" r="5" fill="#ee3fb8" /><circle cx="43" cy="29" r="14" fill="#fff" opacity=".25" /><circle cx="43" cy="29" r="14" fill="none" stroke="#454545" strokeWidth="3" /><path d="M49 42L56 62" stroke="#1c1c1c" strokeWidth="6" strokeLinecap="round" /></g> },
  { name: 'terminal', dot: true, art: <g><rect x="5" y="7" width="60" height="56" rx="3" fill="#080808" /><rect x="9" y="11" width="52" height="48" fill="#282828" /><path d="M12 18L20 22L12 26M22 30H30" stroke="#f4f4f4" strokeWidth="3" fill="none" /></g> },
  { name: 'atom', dot: true, art: <g><circle cx="34" cy="34" r="32" fill="#dcefe0" /><circle cx="34" cy="34" r="29.500" fill="url(#atomGrad)" /><g fill="none" stroke="#fff" strokeWidth="1.800"><ellipse cx="34" cy="34" rx="7" ry="20" transform="rotate(10 34 34)" /><ellipse cx="34" cy="34" rx="7" ry="20" transform="rotate(70 34 34)" /><ellipse cx="34" cy="34" rx="7" ry="20" transform="rotate(130 34 34)" /></g><circle cx="34" cy="34" r="3" fill="#fff" /></g> },
  { name: 'vmware', dot: true, art: <g fill="none" strokeWidth="12"><path d="M32 44H8V8H44V26" stroke="#1c62ac" strokeLinejoin="round" /><path d="M34 28H60V62H26V42" stroke="#d42a30" strokeLinejoin="round" /><path d="M20 24L44 50" stroke="#e9e9ee" strokeWidth="9" /></g> },
  { name: 'clock', dot: true, art: <g><ellipse cx="34" cy="65" rx="20" ry="3" fill="#777" opacity=".6" /><circle cx="34" cy="33" r="32" fill="#e4e4de" stroke="#999" /><circle cx="34" cy="33" r="27" fill="#5f8420" stroke="#222" strokeWidth="2.500" /><path d="M34 7A26 26 0 0 1 59 28Q34 24 9 34A26 26 0 0 1 34 7z" fill="#a3bf68" /><path d="M34 10h8l-8 22zM36 40l12 12-12 3z" fill="#d9eaa0" /><path d="M22 24L38 38M34 35L52 26" stroke="#181818" strokeWidth="3" /><path d="M36 30L30 54" stroke="#b0442a" strokeWidth="1.500" /></g> },
  { name: 'libre', dot: true, art: <Libre /> },
  { name: 'zotero', dot: true, art: <Zotero /> },
  { name: 'rstudio', dot: true, art: <RStudio /> },
  { name: 'photoshop', dot: true, art: <g><path d="M1 2L8 0H67V66H1z" fill="#0a568f" /><path d="M1 2L8 0H67V5H1z" fill="#2ad0f4" /><rect x="1" y="5" width="66" height="60" fill="url(#psGrad)" /><text x="35" y="49" fontSize="40" fontWeight="700" textAnchor="middle" textLength="44" fill="#6fd8fb">Ps</text></g> },
];

const Defs = () => (
  <defs>
    <linearGradient id="blueGrad" x2="0" y2="1"><stop stopColor="#2ac4fa" /><stop offset="1" stopColor="#1c66ee" /></linearGradient>
    <linearGradient id="skyGrad" x2="0" y2="1"><stop stopColor="#62c2fa" /><stop offset="1" stopColor="#1e7eee" /></linearGradient>
    <linearGradient id="greenGrad" x2="0" y2="1"><stop stopColor="#51e06a" /><stop offset="1" stopColor="#14b53a" /></linearGradient>
    <linearGradient id="redGrad" x2="0" y2="1"><stop stopColor="#fb5c62" /><stop offset="1" stopColor="#e71640" /></linearGradient>
    <linearGradient id="atomGrad" x2="0" y2="1"><stop stopColor="#96cf86" /><stop offset="1" stopColor="#179a72" /></linearGradient>
    <linearGradient id="steel" x2="0" y2="1"><stop stopColor="#b9c2c6" /><stop offset="1" stopColor="#6d7376" /></linearGradient>
    <linearGradient id="psGrad" x2="0" y2="1"><stop stopColor="#1087cf" /><stop offset="1" stopColor="#07447c" /></linearGradient>
    <radialGradient id="rGrad" cy=".8"><stop stopColor="#7cd0f8" /><stop offset="1" stopColor="#1868c8" /></radialGradient>
  </defs>
);

const DockBar = styled.footer`
  position: absolute;
  left: 60px;
  top: 1704px;
  width: 2760px;
  height: 96px;
  z-index: 8;
  display: flex;
  align-items: flex-start;
  padding: 11px 0 0 6px;
  border-radius: 10px 10px 0 0;
  background: linear-gradient(rgba(150, 146, 150, 0.35), rgba(255, 255, 255, 0.1)), linear-gradient(90deg, #bdbbbe 0%, #c9c6c9 50%, #d0cdd0 74%, #eae8eb 82%, #edebee 100%);
  box-shadow: 0 -1px 0 #8b898b;
`;
const DockItem = styled.div<{ $w?: number }>`
  width: ${(p) => p.$w || 77.560}px;
  height: 86px;
  display: flex;
  flex-direction: column;
  align-items: center;
  gap: 5px;
`;
const DockDot = styled.i`
  width: 8px;
  height: 8px;
  border-radius: 50%;
  background: #4b494c;
`;
const DockRule = styled.div`
  width: 2px;
  height: 72px;
  margin: 0 15px 0 16px;
  background: #c2c0c3;
`;
const Art = ({ size = 68, children }: { size?: number; children: React.ReactNode }) => (
  <Glyph $w={size} $h={size} viewBox="0 0 68 68">{children}</Glyph>
);

const DockView = () => (
  <DockBar>
    {icons.map((i) => (
      <DockItem key={i.name}>
        <Art>{i.name === 'finder' && <Defs />}{i.art}</Art>
        {i.dot && <DockDot />}
      </DockItem>
    ))}
    <DockRule />
    <DockItem><Art><PaperDoc /></Art></DockItem>
    <DockItem><Art><Trash /></Art></DockItem>
  </DockBar>
);

const QuickLookView = () => (
  <QuickLook>
    <QuickBar>
      <QuickButton $w={300}>Open with Preview</QuickButton>
      <QuickButton $w={79}>
        <Glyph $w={22} $h={28} viewBox="0 0 24 28" fill="none" stroke="#555" strokeWidth="2"><path d="M8 10H1V27H23V10H16M12 19V1M6 7L12 1L18 7" /></Glyph>
      </QuickButton>
    </QuickBar>
    <Shot>
      <ShotMenu>
        <span>2:19</span>
        <ShotName>Benjamin Best</ShotName>
        <SearchGlyph w={23} h={22} />
        <ListGlyph w={30} h={17} ml={24} />
      </ShotMenu>
      <ShotTop>
        <ShotTitle>
          <ShotSearch><SearchGlyph w={19} h={19} color="#a8a8a8" />Search</ShotSearch>
        </ShotTitle>
        <ShotTabs><AddCell $w={41} $s={18}><Plus /></AddCell></ShotTabs>
        <ShotHead $bg="#f0f0f0"><SizeCell>Size</SizeCell><KindCell $head>Kind</KindCell></ShotHead>
      </ShotTop>
      <ShotRows>
        {files.map(([size, kind], i) => (
          <ShotRow key={i} $bg={i % 2 ? '#fff' : '#f4f4f4'}><SizeCell>{size}</SizeCell><KindCell>{kind}</KindCell></ShotRow>
        ))}
      </ShotRows>
      <ShotPath />
      <ShotFoot />
      <ShotTail />
      <ShotDock>
        <ShotIcon $w={56}><Art size={60}><Libre /></Art><ShotDot /></ShotIcon>
        <ShotIcon $w={70}><Art size={60}><Zotero /></Art><ShotDot /></ShotIcon>
        <ShotIcon $w={59}><Art size={60}><RStudio /></Art><ShotDot /></ShotIcon>
        <ShotRule />
        <ShotIcon $w={66}><Art size={60}><PaperDoc /></Art></ShotIcon>
        <ShotIcon $w={62}><Art size={58}><Trash /></Art></ShotIcon>
      </ShotDock>
    </Shot>
  </QuickLook>
);

/* ---------- browser window ---------- */

const Browser = styled.section`
  position: absolute;
  left: 41px;
  top: 46px;
  width: 2167px;
  height: 1656px;
  display: flex;
  flex-direction: column;
  overflow: hidden;
  border: 1px solid #8f8f8f;
  border-top-color: #f4f4f4;
  border-radius: 9px 9px 8px 8px;
  background: #fff;
`;
const BrowserShadow = styled.div`
  position: absolute;
  left: 41px;
  top: 56px;
  width: 2167px;
  height: 1645px;
  border-radius: 9px;
  box-shadow: 0 16px 60px 6px rgba(0, 0, 0, 0.55);
`;
const TabStrip = styled.div`
  height: 72px;
  flex: none;
  display: flex;
  align-items: flex-end;
  padding-left: 24px;
  background: linear-gradient(#ececec, #d4d4d4);
  border-bottom: 1px solid #8d8d8d;
`;
const Light = styled.i<{ $c: string; $e: string; $last?: boolean }>`
  width: 24px;
  height: 24px;
  margin: 0 ${(p) => (p.$last ? 18 : 16)}px 22px 0;
  border-radius: 50%;
  background: ${(p) => p.$c};
  border: 1px solid ${(p) => p.$e};
`;
const Tab = styled.div<{ $w: number; $pull: number; $z: number; $ml?: number }>`
  position: relative;
  z-index: ${(p) => p.$z};
  flex: none;
  width: ${(p) => p.$w}px;
  height: 49px;
  margin-left: ${(p) => p.$ml || 0}px;
  margin-right: ${(p) => p.$pull}px;
  display: flex;
  align-items: center;
  justify-content: center;
`;
const TabShape = styled.svg`
  position: absolute;
  inset: 0;
  width: 100%;
  height: 51px;
  overflow: visible;
`;
const TabIcon = styled.svg`
  position: relative;
  width: 32px;
  height: 32px;
  overflow: visible;
`;
const NewTab = styled.div`
  width: 58px;
  height: 30px;
  margin: 0 11px 9px -3px;
  transform: skewX(16deg);
  border: 1px solid #8f8f8f;
  border-radius: 6px;
  background: #cfcfcf;
  box-shadow: 0 1px 0 #f6f6f6;
`;
const UserButton = styled.div`
  width: 74px;
  height: 52px;
  margin-bottom: 8px;
  border: 1px solid #a0a0a0;
  border-radius: 6px;
  background: linear-gradient(#efefef, #dedede);
  font-size: 24px;
  line-height: 54px;
  text-align: center;
  color: #111;
`;

const wide = 'M0 49C7 48 8 44 11 36L18 9C20 3 22 0.500 28 0.500H76C82 0.500 84 3 86 9L93 36C96 44 97 48 104 49';
const narrow = 'M0 49C6 48 8 44 11 36L18 12C21 3 25 0.500 33 0.500C41 0.500 45 3 48 12L55 36C58 44 60 48 66 49';
const active = 'M-2 51V49C4 48 6 44 9 36L16 9C18 3 20 0.500 25 0.500H68C73 0.500 76 3 78 9L85 36C88 44 89 48 96 49V51';

const gmail = <g><path d="M2 5H30V27H2z" fill="#f2f2f2" /><path d="M2 27V5L16 18L30 5V27H26V12L16 21L6 12V27z" fill="#dd4b3e" /></g>;
const favicons = [
  gmail,
  <g><path d="M0 13L16 0L32 13V29H0z" fill="#1a5bc4" /><path d="M0 13L16 22L32 13V30H0z" fill="#3a9cf4" /><path d="M0 30L14 18L32 30z" fill="#56b4fb" /><path d="M10 9L15 14L25 2" stroke="#fff" strokeWidth="4" fill="none" /></g>,
  gmail,
  <g><path d="M2 0H30V8H2z" fill="#b8b8b8" /><path d="M0 5H32L30 32H2z" fill="#1668d8" /><path d="M0 5H32V16H0z" fill="#0c53c0" /><circle cx="9" cy="2.500" r="2" fill="#fff" /><circle cx="23" cy="2.500" r="2" fill="#fff" /><text x="16" y="24" fontSize="16" textAnchor="middle" fill="#fff">11</text></g>,
  <g><rect width="32" height="32" fill="#7a6cc6" /><path d="M11 5V27M21 5V27M11 16H21" stroke="#fff" strokeWidth="3.500" /></g>,
  <g><path d="M6 3H19L27 11V30H6z" fill="#fafafa" stroke="#8c8c8c" strokeWidth="1.500" /><path d="M19 3V11H27" fill="#e8e8e8" stroke="#8c8c8c" strokeWidth="1.500" /></g>,
  <g><rect width="32" height="32" fill="#fff" /><path d="M5 2H27V12L16 30L5 12z" fill="#1f5c9c" /><path d="M9 8H25M10 14H23M13 20H20" stroke="#a8c6e2" strokeWidth="1.500" /></g>,
  <g><path d="M7 4Q13 0 18 4T25 3M17 7V27M11 12Q6 20 11 25Q17 30 23 22M21 12Q26 15 20 17Q25 20 22 24" fill="none" stroke="#0a0a0a" strokeWidth="3" /><path d="M7 3Q13 0 18 4T25 2Q25 7 20 7Q14 6 10 8Q6 7 7 3z" /></g>,
];

const Toolbar = styled.div`
  height: 71px;
  flex: none;
  display: flex;
  align-items: center;
  padding: 0 18px 0 20px;
  background: linear-gradient(#efefef, #dadada);
  border-bottom: 2px solid #8a8a8a;
`;
const Omnibox = styled.div`
  width: 1846px;
  height: 54px;
  margin: -1px 19px 0 23px;
  display: flex;
  align-items: center;
  padding: 2px 9px 0 14px;
  border: 1px solid #979797;
  border-radius: 6px;
  background: #fff;
  box-shadow: inset 0 2px 2px #e4e4e4, 0 1px 0 #f6f6f6;
  font-size: 28px;
  color: #000;
`;
const Url = styled.span`
  margin-left: 15px;
  flex: 1;
  letter-spacing: 0.580px;
  i { font-style: normal; color: #6d6d6d; }
`;
const Ext = styled.b`
  width: 34px;
  font-size: 24px;
  color: #333;
`;
const Burger = styled.div`
  margin-left: 32px;
  display: flex;
  flex-direction: column;
  gap: 4px;
  i { width: 31px; height: 6px; border-radius: 3px; background: #555; box-shadow: 0 1px 0 #fafafa; }
`;

const Viewport = styled.div`
  flex: 1;
  display: flex;
  overflow: hidden;
`;
const Page = styled.main`
  width: 2138px;
  padding-left: 30px;
  background: linear-gradient(#fff 0 94.500%, #ececec 100%);
  color: #333;
  font-size: 28px;
  line-height: 40px;
`;
const Track = styled.div`
  width: 27px;
  padding: 7px 5px 0;
  background: linear-gradient(#fafafa 0 95%, #eee);
  border-left: 2px solid #e9e9e9;
`;
const Thumb = styled.div`
  width: 16px;
  height: 1345px;
  border-radius: 8px;
  background: #c1c1c1;
`;

const Navbar = styled.nav`
  width: 2076px;
  height: 102px;
  display: flex;
  background: #f8f8f8;
  border-bottom: 2px solid #e7e7e7;
  line-height: 100px;
  color: #777;
`;
const Brand = styled.span`
  width: 342px;
  padding-left: 98px;
  font-size: 36px;
`;
const NavLink = styled.span<{ $on?: boolean }>`
  padding: 0 30px;
  background: ${(p) => (p.$on ? '#e7e7e7' : 'transparent')};
  color: ${(p) => (p.$on ? '#555' : '#777')};
`;
const Inset = styled.div`
  width: 2016px;
  margin-left: 30px;
`;
const Controls = styled(Inset)`
  padding: 40px 0 80px;
  display: flex;
  border-bottom: 2px solid #eee;
`;
const Field = styled.label<{ $w: number }>`
  flex: none;
  width: ${(p) => p.$w}px;
  display: flex;
  flex-direction: column;
  gap: 10px;
  font-weight: 700;
  letter-spacing: -0.150px;
`;
const Select = styled.div`
  width: 600px;
  height: 68px;
  padding: 0 34px 0 24px;
  display: flex;
  align-items: center;
  justify-content: space-between;
  border: 2px solid #ccc;
  border-radius: 8px;
  font-weight: 400;
  letter-spacing: 0.150px;
  &::after { content: ''; border: solid transparent; border-width: 10px 10px 0; border-top-color: #333; margin-top: -4px; }
`;
const Prose = styled.div`
  color: #777;
`;
const Instructions = styled(Prose)`
  padding: 50px 0 20px;
`;
const Line = styled.div<{ $w: number }>`
  width: ${(p) => p.$w}px;
  white-space: nowrap;
  text-align-last: justify;
`;
const Panels = styled(Inset)`
  height: 799px;
  display: flex;
  gap: 60px;
`;
const ChartPanel = styled.div`
  width: 632px;
  background: #f5f5f5;
`;
const MapPanel = styled.div`
  position: relative;
  width: 1324px;
  overflow: hidden;
  background: #d9d9d9;
`;
const Results = styled(Inset)`
  margin-top: 41px;
  padding-top: 40px;
  border-top: 2px solid #eee;
  display: flex;
`;
const Selected = styled.div`
  width: 692px;
  letter-spacing: 0.150px;
  ul { margin: 20px 0 0; padding-left: 80px; line-height: 40px; letter-spacing: 0; }
  sup { font-size: 21px; line-height: 0; }
`;
const Background = styled(Prose)`
  padding-top: 10px;
`;
const StatusBubble = styled.div`
  position: absolute;
  left: 0;
  bottom: 0;
  width: 722px;
  height: 36px;
  padding-left: 8px;
  border: 2px solid #ababab;
  border-left: 0;
  border-radius: 0 8px 0 8px;
  background: linear-gradient(#e3e3e3, #d4d4d4);
  font-size: 23px;
  line-height: 34px;
  letter-spacing: 0.570px;
  color: #111;
`;

/* ---------- tradeoff chart ---------- */

const xTicks = Array.from({ length: 12 }, (_, i) => ({ v: 22 - i * 2, x: 230 + i * 40 }));
const yTicks = Array.from({ length: 12 }, (_, i) => ({ v: i * 10, y: 726 + i * 56.83 }));
const points: Pt[] = [[216.4, 725], [414, 725], [416.4, 725], [637, 980], [665.3, 1183.5], [667.7, 1230.5], [669, 1344.6]];

const Chart = () => (
  <Glyph $w={632} $h={799} viewBox="102 682 632 799">
    <g stroke="#d9d9d9" strokeWidth="2">
      {xTicks.map((t) => <path key={t.v} d={`M${t.x} 694V1377`} />)}
      {yTicks.map((t) => <path key={t.v} d={`M195 ${t.y}H692`} />)}
    </g>
    <g stroke="#000" strokeWidth="2" fill="none">
      <path d="M183 695H195V1388M183 1377H693V1388" />
      {xTicks.map((t) => <path key={t.v} d={`M${t.x} 1377v11`} />)}
      {yTicks.map((t) => <path key={t.v} d={`M182 ${t.y}h13`} />)}
    </g>
    <g fontSize="22">
      {xTicks.map((t) => <text key={t.v} x={t.x} y="1414" textAnchor="middle">{t.v}</text>)}
      {yTicks.map((t) => <text key={t.v} x="176" y={t.y + 8} textAnchor="end">{t.v}</text>)}
    </g>
    <g fontSize="22" fontWeight="700" textAnchor="middle">
      <text x="442" y="1454" textLength="298">conservation (risk from min)</text>
      <text transform="translate(133 1034) rotate(-90)" textLength="239">industry (km from min)</text>
    </g>
    <path d={line(points)} fill="none" stroke="#708090" strokeWidth="2" />
    {points.map(([x, y], i) => (
      <circle key={i} cx={x} cy={y} r="11" fill={i === 6 ? '#0042ff' : '#708090'} />
    ))}
    {points.map(([x, y], i) => i !== 1 && <circle key={i} cx={x} cy={y} r="5.200" />)}
    <g transform="translate(709.500 700)" fill="#aaa">
      {Array.from({ length: 8 }, (_, i) => <rect key={i} x="-3" y="-12" width="6" height="8" rx="1" transform={`rotate(${i * 45})`} />)}
      <circle r="6.500" fill="none" stroke="#aaa" strokeWidth="5" />
    </g>
  </Glyph>
);

/* ---------- map ---------- */

const ocean: Pt[] = [
  [794, 682],
  ...north('835,6 835,100 790,170 810,215 820,320 850,360 740,400 620,470 520,505 400,520 300,490 235,460 240,640 225,760 240,840 260,900 300,970 350,1040 400,1120 440,1240 500,1400 760,1600'),
  ...south('-270,522 0,770 140,885 280,1010 430,1030 450,1090 530,1170 610,1266'),
  [794, 1482],
];
const risk: Pt[] = [
  ...north('235,455 300,485 400,513 520,500 620,460 740,395 830,355 860,365 900,375 960,400 962,440 948,540 960,600 1005,650 1045,690 1055,770 1120,830 1200,930 1270,1010 1262,1060 1290,1150 1280,1230 1330,1280'),
  ...south('290,200 330,210 345,270 390,320 430,335 490,385 560,400 570,540 585,700 600,790 600,840 640,890 700,950 780,985 860,1000 920,1010 1000,1080 1000,1160 900,1140 780,1090 700,1050 600,1000 500,990 430,1030 280,1010 140,885 0,770 -270,522'),
  ...north('500,1400 440,1240 380,1130 300,970 240,840 225,760 240,640'),
];
const alaska = [
  '225,6 240,60 290,85 200,85 190,110 240,130 290,130 240,165 280,190 300,230 330,250 380,245 400,300 420,250 530,250 535,200 540,150 500,150 490,90 440,60 380,40 350,6',
  '215,240 250,250 275,320 345,400 325,412 290,370 240,310', '430,250 540,260 528,400 490,400 440,350 470,330',
  '310,290 360,300 345,330 358,370 320,330', '70,60 130,60 125,90 100,140 80,110', '135,110 190,105 215,140 170,160 135,140',
  '580,6 680,6 672,60 670,110 640,120 580,60', '575,70 640,130 605,185 575,130', '735,6 828,6 810,80 755,170 720,130 740,70',
  '650,130 690,130 710,180 708,230 680,260 660,215 640,250 650,200', '675,290 740,265 750,300 710,325', '735,210 755,215 745,235',
  '105,340 118,345 116,370 108,368', '70,6 130,30 90,25 40,42', '430,6 480,6 495,40 470,25', '690,6 722,6 715,70 690,100 680,60', '95,6 180,8 170,30 130,36', '170,45 192,50 180,66',
].map(north);
const islands = [
  ...[
    '245,650 300,660 370,675 375,720 345,750 400,700 440,685 480,700 500,715 560,710 620,660 605,740 582,830 568,900 555,960 545,1060 510,1080 430,1110 405,1120 345,1060 330,1022 400,1035 350,1000 300,970 265,900 222,830 245,740',
    '380,1128 440,1130 510,1110 580,1080 600,1130 632,1150 600,1170 635,1200 600,1240 620,1270 450,1240 400,1170',
    '818,440 872,440 862,475 820,503', '858,630 895,662 914,690 870,655', '890,745 930,700 965,690 1010,735 1005,775 960,745 940,780 905,768',
    '970,870 1010,845 1045,870 1050,905 1005,910', '935,905 1000,930 1080,990 1115,1040 1145,1085 1110,1115 1060,1070 980,990 940,940',
    '1012,785 1080,830 1180,920 1262,1015 1235,1075 1165,1050 1110,1000 1130,950 1080,910 1050,880 1060,830', '848,505 868,512 882,550 868,555',
    '1200,1108 1250,1150 1275,1200 1230,1160', '1265,1275 1335,1340 1362,1420 1310,1370', '950,590 975,580 1000,615 965,612', '1005,648 1030,650 1020,670',
    '1150,1130 1190,1155 1200,1190 1175,1195', '1270,1060 1300,1050 1330,1100 1290,1130', '248,612 264,620 258,634', '780,438 790,442 784,458', '915,370 950,360 945,390 920,388',
  ].map(north),
  ...[
    '500,640 545,622 562,680 575,745 520,710', '338,295 372,290 374,355 352,368', '345,235 410,230 412,300 360,262', '425,405 480,395 500,470 460,450 440,490',
    '430,1030 520,992 600,1000 680,1040 760,1090 840,1125 900,1150 1000,1180 1200,1200 1500,1230 1500,1290 610,1290 530,1170 460,1100',
    '775,1082 850,1085 855,1095 780,1096', '550,970 630,975 600,990', '650,900 675,890 690,905 665,915',
  ].map(south),
];
const channels: [Pt[], number][] = [
  [north('1085,125 1050,170 1020,240 960,330 905,375'), 5], [north('1140,6 1152,60 1130,110 1100,180 1080,240 1030,300 960,400'), 6],
  [north('1152,60 1190,45 1220,35'), 2], [north('1060,255 1110,260 1180,260'), 3], [north('1000,390 1060,405 1105,440'), 2],
  [north('970,430 1010,510 1080,580'), 3], [north('1000,650 1060,635 1120,620 1180,637 1215,612'), 3], [north('1090,650 1110,700 1155,745'), 2],
  [north('500,715 490,800 480,850 430,880 350,880'), 3], [north('430,880 405,915'), 2], [north('510,1080 430,1115 390,1125'), 4], [north('540,1165 600,1170 640,1185'), 3],
  [north('1490,800 1430,775 1400,810 1405,860 1390,920 1340,970 1310,1040 1280,1010'), 5], [north('1400,930 1450,970 1490,1020 1510,985 1580,965'), 4],
  [inland('300,640 350,640 362,670 385,705 415,750'), 2], [north('1300,1040 1400,1050 1450,1100 1480,1160 1475,1260'), 5], [north('1360,940 1370,1030'), 3],
  [north('1345,1130 1390,1170 1370,1205 1320,1245'), 2], [north('1460,1220 1430,1250 1425,1350'), 3],
  [south('360,70 340,120 345,220 400,300'), 4], [south('400,0 400,60 420,110 395,230'), 5], [south('530,90 500,130 490,200 460,310 430,350'), 5],
  [south('420,110 450,135 500,130'), 3], [south('450,135 455,200 480,290'), 3], [south('575,245 530,270 510,320 470,390'), 4], [south('530,270 540,340 570,400'), 4],
  [south('800,105 832,160 825,200 750,260 755,300 770,350 830,355 840,400 880,440 905,490'), 4], [south('750,290 690,330 680,355 610,380 575,430'), 6],
  [south('770,350 730,400 660,430 635,480 635,510'), 4], [south('830,350 850,330 885,325'), 2.500], [south('575,400 565,540 590,640 595,760'), 11],
  [south('720,570 700,620 690,660 660,725 600,785'), 5], [south('600,815 680,795 750,812 785,770'), 4], [south('770,965 860,975 960,965 1040,962'), 2.500],
  [south('945,910 950,970'), 2.500], [south('1195,895 1218,960 1150,1020 1000,1050'), 3], [south('920,1010 1000,1060 1130,1060'), 7], [south('1410,970 1375,1020 1398,1070 1380,1135 1340,1165'), 6],
  [south('1240,1060 1210,1090 1205,1160'), 3], [south('850,1120 950,1150 1080,1160 1150,1155 1250,1160 1340,1165'), 7], [south('500,400 500,470 580,460'), 3],
  [south('1500,1166 1550,1150'), 2], [south('960,1130 1040,1100 1130,1070 1170,1070'), 4],
];
const greyWater: [Pt[], number][] = [
  [north('1050,6 1068,50 1085,122 1050,160'), 4], [north('835,6 835,105 900,112'), 1.5], [north('950,105 900,170 872,215'), 1.8], [north('870,280 885,350'), 2.500],
  [north('900,370 960,330 1000,285'), 2], [south('645,632 740,640 820,640 905,650 918,625 910,595'), 2.500], [south('580,1102 650,1112 670,1140 700,1112'), 2], [south('500,1165 600,1155 665,1140'), 2],
  [south('265,2 310,28 285,60'), 2], [inland('40,41 42,80 20,130 2,190'), 2],
];
const faint = [
  '700,850 780,880 900,900', '690,900 800,905 910,895', '720,920 790,960', '660,740 730,745', '880,900 910,860', '640,230 700,300', '510,150 580,165',
  '560,270 610,290', '1100,1180 1200,1210 1300,1195 1400,1240', '700,840 760,900 820,890', '1380,940 1410,970', '1160,1180 1280,1200',
].map(south);
const rivers = [
  '320,41 355,90 372,155 355,175 300,215 328,270 300,310 245,345 170,380 110,415',
  '355,173 415,170 430,135 450,125 480,135 500,200 550,290 600,320 618,378 680,338 750,372 795,425 880,460 960,480 1100,488 1200,520 1320,547 1350,515 1350,480 1385,430 1385,380 1350,260 1310,190 1385,130 1385,80 1357,50 1398,45',
  '1360,512 1398,510', '1375,515 1375,600 1398,690',
].map(inland);

type Cell = [number, number, number, number, string];
const hotN: Cell[] = [
  [304, 586, 24, 22, '#8a1622'], [571, 480, 22, 42, '#fb8b70'], [580, 458, 54, 22, '#fc9b83'], [690, 405, 44, 22, '#fdab96'], [738, 444, 22, 24, '#fc9880'],
  [466, 508, 22, 22, '#fdac97'], [780, 380, 22, 42, '#fdbfae'], [796, 398, 24, 20, '#fcb5a2'], [774, 632, 20, 62, '#fdb7a4'], [761, 735, 18, 42, '#fdbfae'],
  [906, 434, 22, 20, '#fcbba8'], [642, 602, 22, 18, '#fdc6b6'], [657, 494, 20, 20, '#fdcabb'], [810, 880, 22, 40, '#fdc3b3'], [875, 917, 22, 20, '#fca893'],
  [1130, 1026, 20, 20, '#fc9e87'], [1154, 1086, 38, 20, '#fdae99'], [1220, 1204, 22, 20, '#fdb09c'], [830, 1145, 30, 40, '#fdc6b6'], [850, 1160, 44, 40, '#fccdbf'],
  [1374, 1460, 20, 42, '#fc8268'], [860, 860, 24, 60, '#fccfc2'], [795, 910, 30, 30, '#fdd0c4'], [885, 800, 22, 22, '#fca58e'],
];
const hotS: Cell[] = [
  [418, 454, 22, 20, '#e9473a'], [66, 530, 20, 18, '#fdae99'], [402, 556, 20, 18, '#fcb5a2'], [348, 696, 22, 20, '#fdac97'], [528, 769, 20, 22, '#fdac97'],
  [572, 944, 22, 20, '#fca690'], [418, 988, 20, 18, '#fcc0af'], [245, 720, 28, 36, '#fbdacf'], [465, 800, 26, 30, '#fbd3c7'], [130, 590, 24, 16, '#fdb8a6'],
  [312, 240, 20, 22, '#fdbfae'], [142, 64, 20, 20, '#fcb09c'], [300, 915, 18, 18, '#fccabd'], [262, 955, 18, 18, '#fccabd'], [520, 590, 18, 18, '#fcc0af'],
];

const speckles = (() => {
  const rand = makeRandom(4242);
  return Array.from({ length: 420 }, () => ({
    x: 1150 + Math.floor(rand() * 78) * 7,
    y: 800 + Math.floor(rand() * 88) * 7,
    w: rand() > 0.7 ? 14 : 7,
    h: rand() > 0.8 ? 21 : 7,
    o: 0.03 + rand() * 0.16,
  }));
})();

const soft = '#c3aaa3';
const fades: { id: string; x1: number; x2: number; stops: [number, string][] }[] = [
  { id: 'dixon', x1: 1137, x2: 1314, stops: [[0.13, '#111'], [0.13, soft]] },
  { id: 'hecate', x1: 1268, x2: 1420, stops: [[0.04, '#111'], [0.04, soft], [0.71, soft], [0.71, '#111'], [0.79, '#111'], [0.79, soft], [0.88, soft], [0.88, '#111']] },
  { id: 'smith', x1: 1588, x2: 1735, stops: [[0.12, soft], [0.12, '#111'], [0.25, '#111'], [0.25, soft], [0.34, soft], [0.34, '#111']] },
  { id: 'qcs', x1: 1662, x2: 1847, stops: [[0.36, soft], [0.36, '#111'], [0.42, '#111'], [0.42, soft], [0.48, soft], [0.48, '#111']] },
];
const labels: [string, number, number, number, string][] = [
  ['Cordova Bay', 1104, 759, 151, '#111'], ['Dixon Entrance', 1137, 877, 177, 'url(#dixon)'], ['Hecate Strait', 1268, 962, 150, 'url(#hecate)'],
  ['Queen Charlotte', 1403, 1224, 182, soft], ['Sound', 1457, 1262, 77, soft], ['Smith Sound', 1588, 1247, 147, 'url(#smith)'],
  ['Queen Charlotte', 1662, 1411, 185, 'url(#qcs)'], ['Strait', 1724, 1448, 59, '#333'],
];
const route = [
  north('1440,725 1430,760 1385,812 1383,850 1320,880 1284,913 1284,990 1320,1050 1320,1135 1270,1188 1267,1270 1240,1295 1227,1350 1200,1350'),
  [[1433, 1208], [1425, 1233], [1423, 1245], [1416, 1253.5], [1403.7, 1253.5], [1373.8, 1242.5], [1349.600, 1242.5]] as Pt[],
];

const Terrain = () => (
  <Glyph $w={1324} $h={799} viewBox="794 682 1324 799">
    <defs>
      <clipPath id="riskClip"><path d={jag(risk, true, 3)} /></clipPath>
      {fades.map((f) => (
        <linearGradient key={f.id} id={f.id} gradientUnits="userSpaceOnUse" x1={f.x1} x2={f.x2} y1="0" y2="0">
          {f.stops.map(([o, c], i) => <stop key={i} offset={o} stopColor={c} />)}
        </linearGradient>
      ))}
    </defs>
    <rect x="794" y="682" width="1324" height="799" fill="#fefefe" />
    <path d={jag(ocean, true, 2)} fill="#d9d9d9" />
    <path d={line(inland('1235,41 1262,60 1284,80 1286,148 1265,105'))} fill="#d9d9d9" />
    <g fill="none" stroke="#ebebeb" strokeWidth="1.500" strokeLinejoin="round">{rivers.map((r, i) => <path key={i} d={jag(r, false, 3, 12)} />)}</g>
    <g fill="none" stroke="#fbe4dc" strokeWidth="1.800">{faint.map((r, i) => <path key={i} d={jag(r, false, 5)} />)}</g>
    <g fill="#fefefe" stroke="#a9a9a9" strokeWidth="1.300">{alaska.map((a, i) => <path key={i} d={jag(a, true, 7, 5)} />)}</g>
    <g fill="none" stroke="#bdb7b4" strokeLinejoin="round">
      {channels.map(([c, w], i) => <path key={i} d={jag(c, false, 5, 5)} strokeWidth={w + 1.800} />)}
      <path d={jag(risk, true, 3)} strokeWidth="1.600" stroke="#cfc8c5" />
    </g>
    <g fill="none" stroke="#fae5de">
      {channels.map(([c, w], i) => <path key={i} d={jag(c, false, 5, 5)} strokeWidth={w} />)}
    </g>
    <g fill="none" stroke="#8f8f8f" strokeLinejoin="round">{greyWater.map(([c, w], i) => <path key={i} d={jag(c, false, 2.500)} strokeWidth={w} />)}</g>
    <path d={jag(risk, true, 3)} fill="#fae6df" />
    <g clipPath="url(#riskClip)">
      <path d="M1150 820L1330 850 1400 820V1000L1370 1090 1335 880 1150 890z" fill="#fcdacf" opacity=".45" />
      <path d="M1360 900L1420 960 1500 1080 1600 1200 1560 1220 1440 1100 1380 1080z" fill="#fcd9cd" opacity=".4" />
      <path d="M1296 880L1326 880 1335 1090 1308 1090z" fill="#f7efec" opacity=".5" />
      {speckles.map((s, i) => <rect key={i} x={s.x} y={s.y} width={s.w} height={s.h} fill="#fcb9a6" opacity={s.o} />)}
      {hotN.map(([x, y, w, h, c], i) => <rect key={i} x={1080 + x / 3} y={680 + y / 3} width={w / 3} height={h / 3} fill={c} />)}
      {hotS.map(([x, y, w, h, c], i) => <rect key={i} x={1440 + x / 3} y={1060 + y / 3} width={w / 3} height={h / 3} fill={c} />)}
    </g>
    <g fill="#fefefe" stroke="#b9b4b2" strokeWidth="1.300">{islands.map((a, i) => <path key={i} d={jag(a, true, 5, 5)} />)}</g>
    <g fill="none">
      {channels.slice(8, 12).map(([c, w], i) => <path key={i} d={jag(c, false, 5, 5)} strokeWidth={w + 1.600} stroke="#cfc6c2" />)}
      {channels.slice(8, 12).map(([c, w], i) => <path key={i} d={jag(c, false, 5, 5)} strokeWidth={w} stroke="#f9e2da" />)}
      <path d={line(south('820,1115 880,1130 940,1150 1040,1163'))} stroke="#fb9379" strokeWidth="6" />
      <path d={line(south('1050,1165 1150,1170 1200,1195'))} stroke="#fcb9a6" strokeWidth="4" />
      <path d={line(south('1400,1060 1392,1100'))} stroke="#fbb09c" strokeWidth="6" />
      <path d={line(south('1374,1130 1370,1150'))} stroke="#ef5a48" strokeWidth="4" />
    </g>
    <g fill="none" stroke="#9b9b9b">{greyWater.slice(6, 8).map(([c, w], i) => <path key={i} d={jag(c, false, 2.500)} strokeWidth={w} />)}</g>
    <g fontSize="26" fontStyle="italic" paintOrder="stroke" strokeWidth="4.500" strokeLinejoin="round">
      {labels.map(([t, x, y, w, s], i) => <text key={i} x={x} y={y} textLength={w} stroke={s} fill={s === soft ? '#f5e4de' : '#dcd8d7'}>{t}</text>)}
    </g>
    <text x="1808" y="800" fontSize="36" textLength="261">British Columbia</text>
    <g fill="none" stroke="#0a2bee" strokeOpacity=".57" strokeWidth="10" strokeLinejoin="round">{route.map((r, i) => <path key={i} d={line(r)} />)}</g>
    {[[1560, 922], [1349.600, 1242.5]].map(([x, y]) => (
      <g key={x}>
        <circle cx={x} cy={y} r="17" fill="#0a35ff" fillOpacity=".55" />
        <circle cx={x} cy={y} r="10" fill="#0a35ff" fillOpacity=".4" />
        <circle cx={x} cy={y} r="5.500" fill="#0a35ff" fillOpacity=".2" stroke="#a9b4f8" strokeWidth="2" />
      </g>
    ))}
  </Glyph>
);

const ZoomControl = styled.div`
  position: absolute;
  left: 20px;
  top: 20px;
  width: 52px;
  border-radius: 8px;
  overflow: hidden;
  box-shadow: 0 2px 10px rgba(0, 0, 0, 0.65);
`;
const ZoomButton = styled.div<{ $off?: boolean }>`
  height: 52px;
  display: flex;
  align-items: center;
  justify-content: center;
  background: ${(p) => (p.$off ? '#f4f4f4' : '#fff')};
  border-bottom: ${(p) => (p.$off ? '0' : '1px solid #ccc')};
  svg { margin-left: 2px; }
`;
const Legend = styled.div`
  position: absolute;
  left: 20px;
  bottom: 19px;
  width: 218px;
  height: 290px;
  padding: 12px 16px;
  border-radius: 10px;
  background: rgba(255, 255, 255, 0.8);
  box-shadow: 0 0 30px rgba(0, 0, 0, 0.2);
  color: #555;
  line-height: 36px;
`;
const LegendScale = styled.div`
  display: flex;
  margin-top: -12px;
`;
const Ramp = styled.div`
  width: 36px;
  height: 180px;
  background: linear-gradient(rgba(252, 244, 240, 0.5), #fbe2d8 20%, #fac4b1 42%, #f99f94 63%, #dc8685 82%, #b0797e);
`;
const RampLabels = styled.div`
  padding-top: 18px;
`;
const Popup = styled.div`
  position: absolute;
  left: 420px;
  top: 412px;
  width: 270px;
  height: 119px;
  padding: 27px 0 0 40px;
  border-radius: 24px;
  background: #fff;
  box-shadow: 0 6px 28px rgba(0, 0, 0, 0.4);
  font-size: 24px;
  line-height: 32px;
  white-space: nowrap;
  &::after { content: ''; position: absolute; left: 114px; top: 118px; border: solid transparent; border-width: 21px 21px 0; border-top-color: #fff; }
`;
const PopupClose = styled.svg`
  position: absolute;
  right: 12px;
  top: 14px;
  width: 20px;
  height: 19px;
`;
const Attribution = styled.div`
  position: absolute;
  right: 0;
  bottom: 0;
  width: 810px;
  height: 31px;
  padding: 0 10px;
  background: rgba(255, 255, 255, 0.7);
  font-size: 22px;
  line-height: 32px;
  text-align-last: justify;
  white-space: nowrap;
  a { color: #0078a8; }
`;

const MapView = () => (
  <MapPanel>
    <Terrain />
    <ZoomControl>
      <ZoomButton><Glyph $w={20} $h={20} viewBox="0 0 20 20" stroke="#000" strokeWidth="4"><path d="M10 0V20M0 10H20" /></Glyph></ZoomButton>
      <ZoomButton $off><Glyph $w={18} $h={4} viewBox="0 0 18 4"><path d="M0 0H18V4H0z" /></Glyph></ZoomButton>
    </ZoomControl>
    <Legend>
      <b>Conservation<br />Risk</b>
      <LegendScale>
        <Ramp />
        <RampLabels>
          {['-0.2', '-0.4', '-0.6', '-0.8', '-1.0'].map((v) => <div key={v}>{v}</div>)}
        </RampLabels>
      </LegendScale>
    </Legend>
    <Popup>
      <b>S of Haida Gwaii</b><br />-130.98, 51.89
      <PopupClose viewBox="0 0 20 19" stroke="#c3c3c3" strokeWidth="5"><path d="M2 1.500L18 17.500M18 1.500L2 17.500" /></PopupClose>
    </Popup>
    <Attribution>
      <a>Leaflet</a> | Map tiles by <a>Stamen Design</a>, <a>CC BY 3.0</a> — Map data © <a>OpenStreetMap</a>
    </Attribution>
  </MapPanel>
);

const BrowserView = () => (
  <Browser>
    <TabStrip>
      <Light $c="#fc5b57" $e="#e2453f" />
      <Light $c="#fdbe41" $e="#dfa033" />
      <Light $c="#35c84a" $e="#27aa35" $last />
      {favicons.map((f, i) => (
        <Tab key={i} $w={104} $pull={-26} $z={50 - i}>
          <TabShape viewBox="0 0 104 51"><path d={wide} fill="#d2d2d2" stroke="#8f8f8f" strokeWidth="1.500" /></TabShape>
          <TabIcon viewBox="0 0 32 32">{f}</TabIcon>
        </Tab>
      ))}
      {Array.from({ length: 32 }, (_, i) => (
        <Tab key={i} $w={66} $pull={-30} $z={40 - i}>
          <TabShape viewBox="0 0 66 51">
            <path d={narrow} fill="#d0d0d0" stroke="#8f8f8f" strokeWidth="1.500" />
            <path d={`M39 ${21 + (i % 3) * 3}v${i % 4 === 3 ? 12 : 7}`} stroke="#b2b2b2" strokeWidth="1.500" />
          </TabShape>
        </Tab>
      ))}
      <Tab $w={94} $pull={-8} $z={60} $ml={7}>
        <TabShape viewBox="0 0 94 51"><path d={active} fill="#f0f0f0" stroke="#8f8f8f" strokeWidth="1.500" /></TabShape>
        <TabIcon viewBox="0 0 32 32"><path d="M9.500 10L21.500 22M21.500 10L9.500 22" stroke="#5d5d5d" strokeWidth="3" /></TabIcon>
      </Tab>
      <NewTab />
      <UserButton>Ben</UserButton>
    </TabStrip>
    <Toolbar>
      <Glyph $w={32} $h={28} viewBox="0 0 32 28" fill="none" stroke="#555" strokeWidth="6"><path d="M32 14H5M16 2L4 14L16 26" /></Glyph>
      <Glyph $w={32} $h={28} $ml={23} viewBox="0 0 32 28" fill="none" stroke="#c6c6c6" strokeWidth="6"><path d="M0 14H27M16 2L28 14L16 26" /></Glyph>
      <Glyph $w={28} $h={28} $ml={26} viewBox="0 0 28 28" fill="none" stroke="#555" strokeWidth="5"><path d="M24 18A11 11 0 1 1 21 6" /><path d="M28 0V13H15z" fill="#555" stroke="none" /></Glyph>
      <Omnibox>
        <Glyph $w={24} $h={30} viewBox="0 0 24 30" fill="#fbfbfb" stroke="#8f8f8f" strokeWidth="1.800"><path d="M1 1H15L23 9V29H1zM15 1V9H23" /></Glyph>
        <Url>ohi-science.nceas.ucsb.edu<i>/bdb/</i></Url>
        <Glyph $w={34} $h={33} viewBox="0 0 34 33" fill="#d4d4d4"><path d="M17 0L21.500 11.500L34 12.500L24.500 20.500L27.500 33L17 26L6.500 33L9.500 20.500L0 12.500L12.500 11.500z" /></Glyph>
      </Omnibox>
      <Ext>md</Ext>
      <Burger><i /><i /><i /></Burger>
    </Toolbar>
    <Viewport>
      <Page>
        <Navbar>
          <Brand>Conservation</Brand>
          <NavLink $on>Routing</NavLink>
          <NavLink>Siting</NavLink>
        </Navbar>
        <Controls>
          <Field $w={1038}>Study Area:<Select>British Columbia</Select></Field>
          <Field $w={600}>Industry Profile:<Select>Oil Tanker</Select></Field>
        </Controls>
        <Instructions>
          <Line $w={2052}><b>Instructions.</b> Click on a point in the tradeoff chart below to display the mapped route to the right and values below. Map is zoomable/pannable and start/end points</Line>
          <Line $w={1420}>clickable. Eventually you'll be able to create arbitrary start/end points for tradeoff analysis of conservation routing.</Line>
        </Instructions>
        <Panels>
          <ChartPanel><Chart /></ChartPanel>
          <MapView />
        </Panels>
        <Results>
          <Selected>
            Tradeoff selected:
            <ul><li>transformation: (x*100)<sup>2</sup></li></ul>
          </Selected>
          <Background>
            <Line $w={1321}><b>Background.</b> Welcome to Conservation Routing! Least cost routes are calculated based on different cost</Line>
            <Line $w={1321}>surfaces. The initial cost surface applies a constant value for all cells resulting in a Euclidean path with the</Line>
            <Line $w={1321}>minimum distance. This path would be the least costly to industry, making it the reference point (<em>min(dist)</em>)</Line>
          </Background>
        </Results>
      </Page>
      <Track><Thumb /></Track>
    </Viewport>
    <StatusBubble>ohi-science.nceas.ucsb.edu/bdb/#</StatusBubble>
  </Browser>
);

export default function App() {
  return (
    <Desktop>
      <Global />
      <UnderDock />
      <Editor />
      <Finder />
      <StubWindow />
      <QuickLookView />
      <BrowserShadow />
      <BrowserView />
      <TopBar />
      <DockView />
    </Desktop>
  );
}
